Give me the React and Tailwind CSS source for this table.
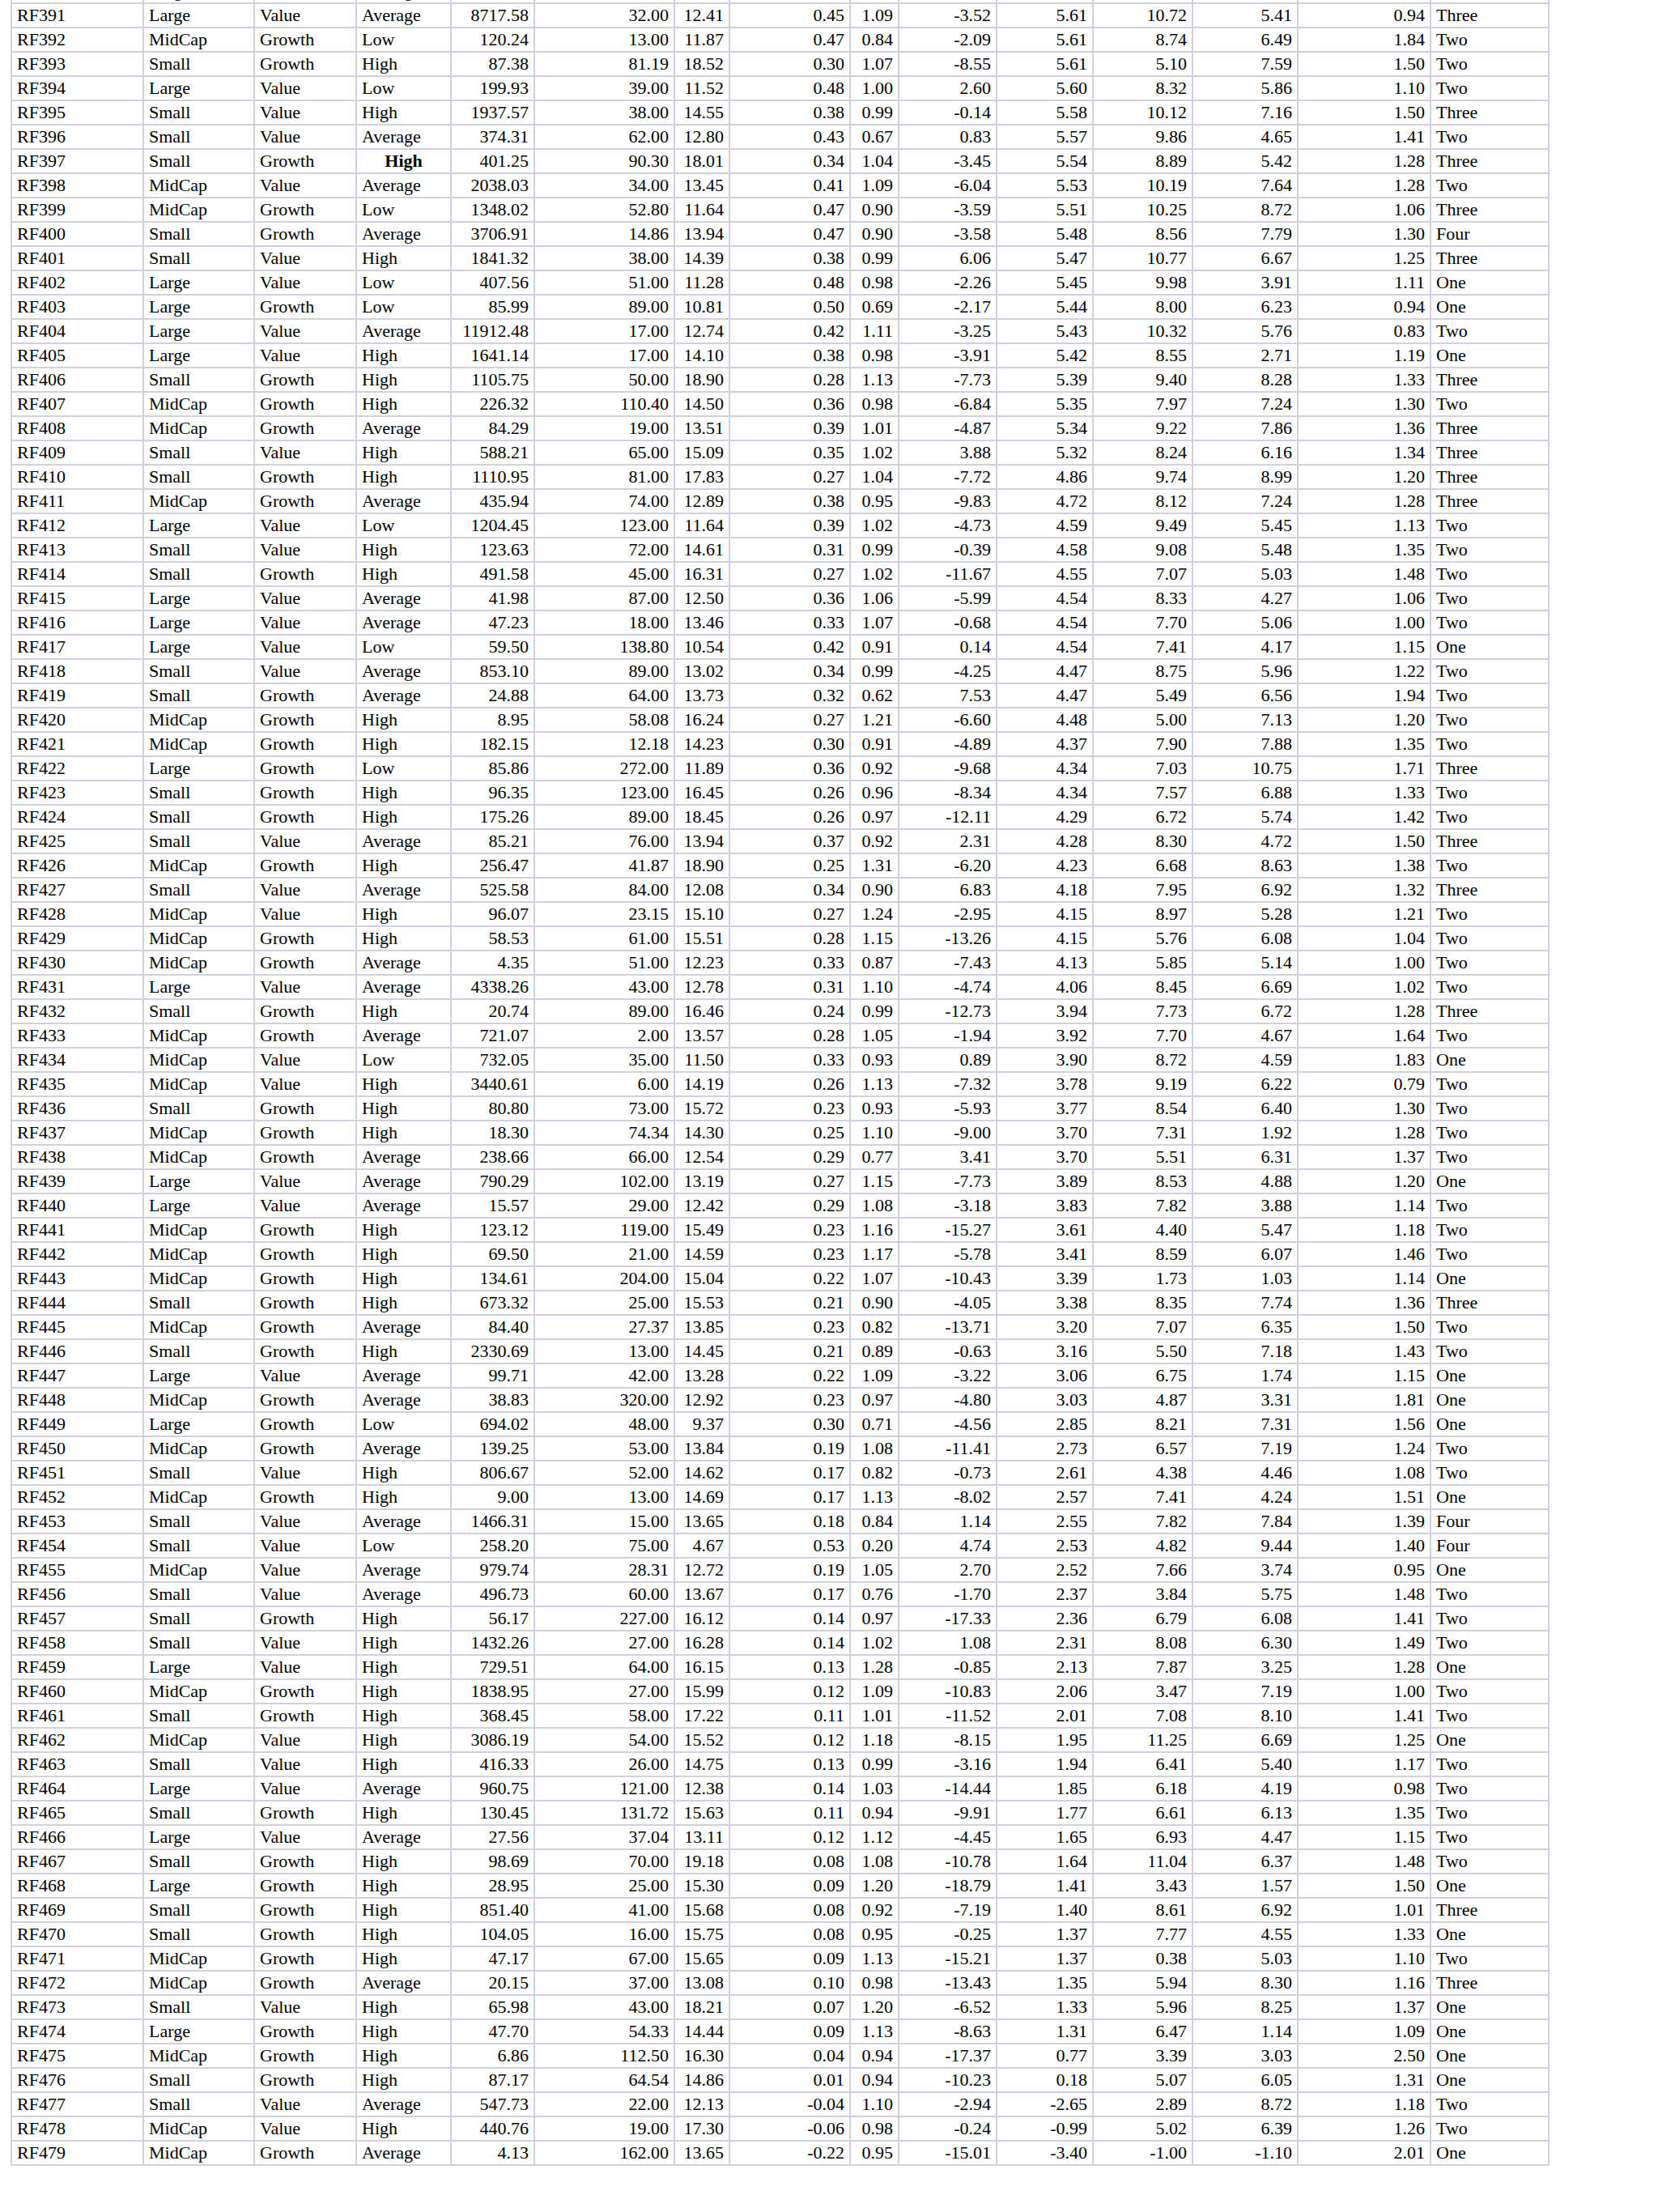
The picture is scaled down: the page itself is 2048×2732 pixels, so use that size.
import React from "react";

// rows of the fund table, one line per row (RF390 is only peeking in at the top)
const raw = `
RF390 Large Value Average 2911.40 45.00 13.20 0.44 1.02 -1.87 5.62 9.15 6.04 1.12 Two
RF391 Large Value Average 8717.58 32.00 12.41 0.45 1.09 -3.52 5.61 10.72 5.41 0.94 Three
RF392 MidCap Growth Low 120.24 13.00 11.87 0.47 0.84 -2.09 5.61 8.74 6.49 1.84 Two
RF393 Small Growth High 87.38 81.19 18.52 0.30 1.07 -8.55 5.61 5.10 7.59 1.50 Two
RF394 Large Value Low 199.93 39.00 11.52 0.48 1.00 2.60 5.60 8.32 5.86 1.10 Two
RF395 Small Value High 1937.57 38.00 14.55 0.38 0.99 -0.14 5.58 10.12 7.16 1.50 Three
RF396 Small Value Average 374.31 62.00 12.80 0.43 0.67 0.83 5.57 9.86 4.65 1.41 Two
RF397 Small Growth High 401.25 90.30 18.01 0.34 1.04 -3.45 5.54 8.89 5.42 1.28 Three
RF398 MidCap Value Average 2038.03 34.00 13.45 0.41 1.09 -6.04 5.53 10.19 7.64 1.28 Two
RF399 MidCap Growth Low 1348.02 52.80 11.64 0.47 0.90 -3.59 5.51 10.25 8.72 1.06 Three
RF400 Small Growth Average 3706.91 14.86 13.94 0.47 0.90 -3.58 5.48 8.56 7.79 1.30 Four
RF401 Small Value High 1841.32 38.00 14.39 0.38 0.99 6.06 5.47 10.77 6.67 1.25 Three
RF402 Large Value Low 407.56 51.00 11.28 0.48 0.98 -2.26 5.45 9.98 3.91 1.11 One
RF403 Large Growth Low 85.99 89.00 10.81 0.50 0.69 -2.17 5.44 8.00 6.23 0.94 One
RF404 Large Value Average 11912.48 17.00 12.74 0.42 1.11 -3.25 5.43 10.32 5.76 0.83 Two
RF405 Large Value High 1641.14 17.00 14.10 0.38 0.98 -3.91 5.42 8.55 2.71 1.19 One
RF406 Small Growth High 1105.75 50.00 18.90 0.28 1.13 -7.73 5.39 9.40 8.28 1.33 Three
RF407 MidCap Growth High 226.32 110.40 14.50 0.36 0.98 -6.84 5.35 7.97 7.24 1.30 Two
RF408 MidCap Growth Average 84.29 19.00 13.51 0.39 1.01 -4.87 5.34 9.22 7.86 1.36 Three
RF409 Small Value High 588.21 65.00 15.09 0.35 1.02 3.88 5.32 8.24 6.16 1.34 Three
RF410 Small Growth High 1110.95 81.00 17.83 0.27 1.04 -7.72 4.86 9.74 8.99 1.20 Three
RF411 MidCap Growth Average 435.94 74.00 12.89 0.38 0.95 -9.83 4.72 8.12 7.24 1.28 Three
RF412 Large Value Low 1204.45 123.00 11.64 0.39 1.02 -4.73 4.59 9.49 5.45 1.13 Two
RF413 Small Value High 123.63 72.00 14.61 0.31 0.99 -0.39 4.58 9.08 5.48 1.35 Two
RF414 Small Growth High 491.58 45.00 16.31 0.27 1.02 -11.67 4.55 7.07 5.03 1.48 Two
RF415 Large Value Average 41.98 87.00 12.50 0.36 1.06 -5.99 4.54 8.33 4.27 1.06 Two
RF416 Large Value Average 47.23 18.00 13.46 0.33 1.07 -0.68 4.54 7.70 5.06 1.00 Two
RF417 Large Value Low 59.50 138.80 10.54 0.42 0.91 0.14 4.54 7.41 4.17 1.15 One
RF418 Small Value Average 853.10 89.00 13.02 0.34 0.99 -4.25 4.47 8.75 5.96 1.22 Two
RF419 Small Growth Average 24.88 64.00 13.73 0.32 0.62 7.53 4.47 5.49 6.56 1.94 Two
RF420 MidCap Growth High 8.95 58.08 16.24 0.27 1.21 -6.60 4.48 5.00 7.13 1.20 Two
RF421 MidCap Growth High 182.15 12.18 14.23 0.30 0.91 -4.89 4.37 7.90 7.88 1.35 Two
RF422 Large Growth Low 85.86 272.00 11.89 0.36 0.92 -9.68 4.34 7.03 10.75 1.71 Three
RF423 Small Growth High 96.35 123.00 16.45 0.26 0.96 -8.34 4.34 7.57 6.88 1.33 Two
RF424 Small Growth High 175.26 89.00 18.45 0.26 0.97 -12.11 4.29 6.72 5.74 1.42 Two
RF425 Small Value Average 85.21 76.00 13.94 0.37 0.92 2.31 4.28 8.30 4.72 1.50 Three
RF426 MidCap Growth High 256.47 41.87 18.90 0.25 1.31 -6.20 4.23 6.68 8.63 1.38 Two
RF427 Small Value Average 525.58 84.00 12.08 0.34 0.90 6.83 4.18 7.95 6.92 1.32 Three
RF428 MidCap Value High 96.07 23.15 15.10 0.27 1.24 -2.95 4.15 8.97 5.28 1.21 Two
RF429 MidCap Growth High 58.53 61.00 15.51 0.28 1.15 -13.26 4.15 5.76 6.08 1.04 Two
RF430 MidCap Growth Average 4.35 51.00 12.23 0.33 0.87 -7.43 4.13 5.85 5.14 1.00 Two
RF431 Large Value Average 4338.26 43.00 12.78 0.31 1.10 -4.74 4.06 8.45 6.69 1.02 Two
RF432 Small Growth High 20.74 89.00 16.46 0.24 0.99 -12.73 3.94 7.73 6.72 1.28 Three
RF433 MidCap Growth Average 721.07 2.00 13.57 0.28 1.05 -1.94 3.92 7.70 4.67 1.64 Two
RF434 MidCap Value Low 732.05 35.00 11.50 0.33 0.93 0.89 3.90 8.72 4.59 1.83 One
RF435 MidCap Value High 3440.61 6.00 14.19 0.26 1.13 -7.32 3.78 9.19 6.22 0.79 Two
RF436 Small Growth High 80.80 73.00 15.72 0.23 0.93 -5.93 3.77 8.54 6.40 1.30 Two
RF437 MidCap Growth High 18.30 74.34 14.30 0.25 1.10 -9.00 3.70 7.31 1.92 1.28 Two
RF438 MidCap Growth Average 238.66 66.00 12.54 0.29 0.77 3.41 3.70 5.51 6.31 1.37 Two
RF439 Large Value Average 790.29 102.00 13.19 0.27 1.15 -7.73 3.89 8.53 4.88 1.20 One
RF440 Large Value Average 15.57 29.00 12.42 0.29 1.08 -3.18 3.83 7.82 3.88 1.14 Two
RF441 MidCap Growth High 123.12 119.00 15.49 0.23 1.16 -15.27 3.61 4.40 5.47 1.18 Two
RF442 MidCap Growth High 69.50 21.00 14.59 0.23 1.17 -5.78 3.41 8.59 6.07 1.46 Two
RF443 MidCap Growth High 134.61 204.00 15.04 0.22 1.07 -10.43 3.39 1.73 1.03 1.14 One
RF444 Small Growth High 673.32 25.00 15.53 0.21 0.90 -4.05 3.38 8.35 7.74 1.36 Three
RF445 MidCap Growth Average 84.40 27.37 13.85 0.23 0.82 -13.71 3.20 7.07 6.35 1.50 Two
RF446 Small Growth High 2330.69 13.00 14.45 0.21 0.89 -0.63 3.16 5.50 7.18 1.43 Two
RF447 Large Value Average 99.71 42.00 13.28 0.22 1.09 -3.22 3.06 6.75 1.74 1.15 One
RF448 MidCap Growth Average 38.83 320.00 12.92 0.23 0.97 -4.80 3.03 4.87 3.31 1.81 One
RF449 Large Growth Low 694.02 48.00 9.37 0.30 0.71 -4.56 2.85 8.21 7.31 1.56 One
RF450 MidCap Growth Average 139.25 53.00 13.84 0.19 1.08 -11.41 2.73 6.57 7.19 1.24 Two
RF451 Small Value High 806.67 52.00 14.62 0.17 0.82 -0.73 2.61 4.38 4.46 1.08 Two
RF452 MidCap Growth High 9.00 13.00 14.69 0.17 1.13 -8.02 2.57 7.41 4.24 1.51 One
RF453 Small Value Average 1466.31 15.00 13.65 0.18 0.84 1.14 2.55 7.82 7.84 1.39 Four
RF454 Small Value Low 258.20 75.00 4.67 0.53 0.20 4.74 2.53 4.82 9.44 1.40 Four
RF455 MidCap Value Average 979.74 28.31 12.72 0.19 1.05 2.70 2.52 7.66 3.74 0.95 One
RF456 Small Value Average 496.73 60.00 13.67 0.17 0.76 -1.70 2.37 3.84 5.75 1.48 Two
RF457 Small Growth High 56.17 227.00 16.12 0.14 0.97 -17.33 2.36 6.79 6.08 1.41 Two
RF458 Small Value High 1432.26 27.00 16.28 0.14 1.02 1.08 2.31 8.08 6.30 1.49 Two
RF459 Large Value High 729.51 64.00 16.15 0.13 1.28 -0.85 2.13 7.87 3.25 1.28 One
RF460 MidCap Growth High 1838.95 27.00 15.99 0.12 1.09 -10.83 2.06 3.47 7.19 1.00 Two
RF461 Small Growth High 368.45 58.00 17.22 0.11 1.01 -11.52 2.01 7.08 8.10 1.41 Two
RF462 MidCap Value High 3086.19 54.00 15.52 0.12 1.18 -8.15 1.95 11.25 6.69 1.25 One
RF463 Small Value High 416.33 26.00 14.75 0.13 0.99 -3.16 1.94 6.41 5.40 1.17 Two
RF464 Large Value Average 960.75 121.00 12.38 0.14 1.03 -14.44 1.85 6.18 4.19 0.98 Two
RF465 Small Growth High 130.45 131.72 15.63 0.11 0.94 -9.91 1.77 6.61 6.13 1.35 Two
RF466 Large Value Average 27.56 37.04 13.11 0.12 1.12 -4.45 1.65 6.93 4.47 1.15 Two
RF467 Small Growth High 98.69 70.00 19.18 0.08 1.08 -10.78 1.64 11.04 6.37 1.48 Two
RF468 Large Growth High 28.95 25.00 15.30 0.09 1.20 -18.79 1.41 3.43 1.57 1.50 One
RF469 Small Growth High 851.40 41.00 15.68 0.08 0.92 -7.19 1.40 8.61 6.92 1.01 Three
RF470 Small Growth High 104.05 16.00 15.75 0.08 0.95 -0.25 1.37 7.77 4.55 1.33 One
RF471 MidCap Growth High 47.17 67.00 15.65 0.09 1.13 -15.21 1.37 0.38 5.03 1.10 Two
RF472 MidCap Growth Average 20.15 37.00 13.08 0.10 0.98 -13.43 1.35 5.94 8.30 1.16 Three
RF473 Small Value High 65.98 43.00 18.21 0.07 1.20 -6.52 1.33 5.96 8.25 1.37 One
RF474 Large Growth High 47.70 54.33 14.44 0.09 1.13 -8.63 1.31 6.47 1.14 1.09 One
RF475 MidCap Growth High 6.86 112.50 16.30 0.04 0.94 -17.37 0.77 3.39 3.03 2.50 One
RF476 Small Growth High 87.17 64.54 14.86 0.01 0.94 -10.23 0.18 5.07 6.05 1.31 One
RF477 Small Value Average 547.73 22.00 12.13 -0.04 1.10 -2.94 -2.65 2.89 8.72 1.18 Two
RF478 MidCap Value High 440.76 19.00 17.30 -0.06 0.98 -0.24 -0.99 5.02 6.39 1.26 Two
RF479 MidCap Growth Average 4.13 162.00 13.65 -0.22 0.95 -15.01 -3.40 -1.00 -1.10 2.01 One
`;

const rows = raw
  .trim()
  .split("\n")
  .map((line) => line.trim().split(/\s+/));

// first four columns and the last one are text, the rest are numbers
const isText = (i) => i < 4 || i === 14;

function Cell({ value, col, bold }) {
  if (bold) {
    return (
      <div className="h-[30px] border-r-2 border-b-2 border-[#d0d0e0] px-[6px] text-center font-bold leading-[28px] whitespace-nowrap">
        {value}
      </div>
    );
  }
  return (
    <div
      className={
        isText(col)
          ? "h-[30px] border-r-2 border-b-2 border-[#d0d0e0] px-[6px] text-left leading-[28px] whitespace-nowrap"
          : "h-[30px] border-r-2 border-b-2 border-[#d0d0e0] px-[6px] text-right leading-[28px] whitespace-nowrap"
      }
    >
      {value}
    </div>
  );
}

export default function App() {
  return (
    <div className="min-h-screen overflow-hidden bg-white text-black font-['Liberation_Serif','Times_New_Roman',serif] text-[22px]">
      <div className="-mt-[25px] ml-[13px] grid w-fit grid-cols-[163px_137px_126px_117px_103px_173px_68px_149px_60px_121px_119px_123px_130px_164px_146px] border-l-2 border-[#d0d0e0]">
        {rows.map((row) =>
          row.map((value, col) => (
            <Cell
              key={row[0] + "-" + col}
              value={value}
              col={col}
              bold={row[0] === "RF397" && col === 3}
            />
          ))
        )}
      </div>
    </div>
  );
}
